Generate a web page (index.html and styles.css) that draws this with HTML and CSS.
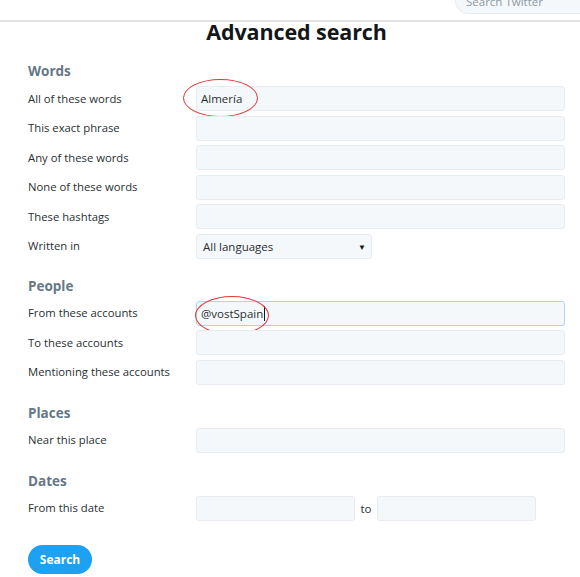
FILE: index.html
```html
<!DOCTYPE html>
<html lang="en">
<head>
<meta charset="utf-8">
<title>Advanced search</title>
<link rel="stylesheet" href="styles.css">
</head>
<body>
<header class="topbar">
  <div class="topsearch">Search Twitter</div>
</header>
<main class="page">
  <h1 class="title">Advanced search</h1>

  <section class="group group-words">
    <h2 class="group-title">Words</h2>
    <div class="rows">
      <div class="row"><span class="label">All of these words</span><div class="field"><span class="value">Almería</span><span class="mark mark-one"></span></div></div>
      <div class="row"><span class="label">This exact phrase</span><div class="field"></div></div>
      <div class="row"><span class="label">Any of these words</span><div class="field"></div></div>
      <div class="row"><span class="label">None of these words</span><div class="field"></div></div>
      <div class="row"><span class="label">These hashtags</span><div class="field"></div></div>
      <div class="row"><span class="label">Written in</span><div class="field select"><span class="value">All languages</span><span class="arrow">▼</span></div></div>
    </div>
  </section>

  <section class="group group-people">
    <h2 class="group-title">People</h2>
    <div class="rows">
      <div class="row"><span class="label">From these accounts</span><div class="field focused"><span class="value">@vostSpain</span><span class="caret"></span><span class="mark mark-two"></span></div></div>
      <div class="row"><span class="label">To these accounts</span><div class="field"></div></div>
      <div class="row"><span class="label">Mentioning these accounts</span><div class="field"></div></div>
    </div>
  </section>

  <section class="group">
    <h2 class="group-title">Places</h2>
    <div class="rows">
      <div class="row"><span class="label">Near this place</span><div class="field"></div></div>
    </div>
  </section>

  <section class="group">
    <h2 class="group-title">Dates</h2>
    <div class="rows">
      <div class="row"><span class="label">From this date</span>
        <div class="daterange"><div class="field date"></div><span class="to">to</span><div class="field date"></div></div>
      </div>
    </div>
  </section>

  <button class="search-btn" type="button">Search</button>
</main>
</body>
</html>
```

FILE: styles.css
```css
* { box-sizing: border-box; }
html, body { margin: 0; padding: 0; background: #fff; }
body {
  font-family: "Open Sans", "Noto Sans", sans-serif;
  color: #14171a;
  overflow: hidden;
}
.topbar {
  height: 22px;
  border-bottom: 2px solid #e1e3e5;
  display: flex;
  justify-content: flex-start;
  padding-left: 455px;
  overflow: hidden;
}
.topsearch {
  flex: none;
  width: 160px;
  height: 26px;
  margin-top: -12px;
  background: #f5f8fa;
  border: 1px solid #e6ecf0;
  border-radius: 13px;
  padding: 6px 0 0 10px;
  font-size: 11.5px;
  line-height: 14px;
  color: #8a9aa6;
}
.page {
  padding: 0 15px 0 28px;
}
.title {
  margin: 0;
  text-align: center;
  font-size: 21.5px;
  line-height: 20px;
  font-weight: 700;
  color: #14171a;
  letter-spacing: -0.1px;
}
.group { margin-top: 18px; }
.group-words { margin-top: 19px; }
.group-people { margin-top: 17px; }
.group-title {
  margin: 0 0 5px;
  font-size: 13.5px;
  line-height: 20px;
  font-weight: 700;
  color: #657786;
}
.rows { display: flex; flex-direction: column; gap: 4.5px; }
.row {
  display: grid;
  grid-template-columns: 168px 369px;
  align-items: center;
}
.label {
  font-size: 11.3px;
  line-height: 16px;
  color: #292f33;
}
.field {
  position: relative;
  height: 25px;
  background: #f5f8fa;
  border: 1px solid #e6ecf0;
  border-radius: 3px;
  display: flex;
  align-items: center;
  padding: 0 4px;
  font-size: 11.5px;
  color: #292f33;
}
.field.focused { border-color: #a9d5ee; }
.field.select {
  width: 176px;
  justify-content: space-between;
  padding: 0 5px 0 6px;
}
.arrow { font-size: 8px; color: #14171a; }
.caret {
  display: block;
  width: 1px;
  height: 15px;
  background: #14171a;
  margin-left: 1px;
}
.mark {
  position: absolute;
  border: 1.2px solid #e2393a;
  border-radius: 50%;
  pointer-events: none;
}
.mark-one { left: -14px; top: -8px; width: 75px; height: 38px; }
.mark-two { left: -2px; top: -6px; width: 74px; height: 39px; }
.daterange {
  display: flex;
  align-items: center;
  width: 340px;
}
.field.date { width: 159px; }
.to {
  width: 22px;
  text-align: center;
  font-size: 11.5px;
  color: #292f33;
}
.search-btn {
  display: block;
  margin-top: 24.5px;
  width: 64px;
  height: 29px;
  border: 0;
  border-radius: 15px;
  background: #1da1f2;
  color: #fff;
  font-family: "Open Sans", "Noto Sans", sans-serif;
  font-size: 12px;
  font-weight: 700;
  padding: 0;
}
```
